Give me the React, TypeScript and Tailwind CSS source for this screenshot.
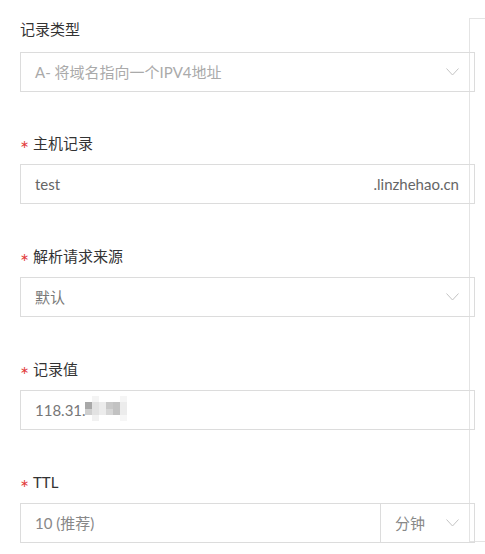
import React from "react";

const Chevron = () => (
  <svg width="13" height="8" viewBox="0 0 13 8" className="shrink-0">
    <polyline points="0.5,0.5 6.5,7 12.5,0.5" fill="none" stroke="#c4c4c4" strokeWidth="1" />
  </svg>
);

const Label = ({ text, required = true, mb = "mb-[11px]" }: { text: string; required?: boolean; mb?: string }) => (
  <div className={`h-[20px] flex items-center text-[15px] text-[#333] ${mb}`}>
    {required && (
      <span
        className="w-[13px] shrink-0 text-[#e23a3a] text-[11px] leading-none translate-y-[1px]"
        style={{ fontFamily: '"DejaVu Sans", sans-serif' }}
      >
        ∗
      </span>
    )}
    <span>{text}</span>
  </div>
);

const Mosaic = () => (
  <svg width="48" height="28" viewBox="0 0 48 28" className="-ml-[1px]">
    <rect x="0" y="6" width="7" height="7" fill="#a8a8a8" />
    <rect x="0" y="13" width="7" height="6" fill="#cfcfcf" />
    <rect x="7" y="0" width="7" height="6" fill="#f4f4f4" />
    <rect x="7" y="6" width="7" height="13" fill="#e2e2e2" />
    <rect x="7" y="19" width="7" height="6" fill="#f1f1f1" />
    <rect x="14" y="6" width="7" height="13" fill="#ececec" />
    <rect x="21" y="6" width="7" height="7" fill="#c8c8c8" />
    <rect x="21" y="13" width="7" height="6" fill="#d6d6d6" />
    <rect x="28" y="6" width="7" height="13" fill="#c2c2c2" />
    <rect x="35" y="0" width="7" height="6" fill="#f5f5f5" />
    <rect x="35" y="6" width="7" height="13" fill="#ececec" />
    <rect x="35" y="19" width="7" height="6" fill="#f6f6f6" />
  </svg>
);

export default function App() {
  return (
    <div
      className="relative w-[485px] h-[554px] bg-white overflow-hidden"
      style={{ fontFamily: 'Lato, "Noto Sans CJK SC", sans-serif' }}
    >
      <div className="absolute left-[469px] top-[18px] w-[100px] h-[524px] border border-[#e4e4e4] pointer-events-none" />
      <div className="relative pl-[20px] pr-[10px] pt-[19px]">
        {/* 记录类型 */}
        <div className="mb-[41px]">
          <Label text="记录类型" required={false} mb="mb-[13px]" />
          <div className="h-[40px] border border-[#dcdcdc] flex items-center pl-[14px] pr-[15px] text-[15px] text-[#aaaaaa]">
            <span className="flex-1">A- 将域名指向一个IPV4地址</span>
            <Chevron />
          </div>
        </div>

        {/* 主机记录 */}
        <div className="mb-[42px]">
          <Label text="主机记录" />
          <div className="h-[40px] border border-[#dcdcdc] flex items-center pl-[14px] pr-[15px] text-[15px] text-[#666]">
            <span className="flex-1">test</span>
            <span>.linzhehao.cn</span>
          </div>
        </div>

        {/* 解析请求来源 */}
        <div className="mb-[42px]">
          <Label text="解析请求来源" />
          <div className="h-[40px] border border-[#dcdcdc] flex items-center pl-[14px] pr-[15px] text-[15px] text-[#777]">
            <span className="flex-1">默认</span>
            <Chevron />
          </div>
        </div>

        {/* 记录值 */}
        <div className="mb-[42px]">
          <Label text="记录值" />
          <div className="h-[40px] border border-[#dcdcdc] flex items-center pl-[14px] pr-[15px] text-[15px] text-[#777]">
            <span>118.31.</span>
            <Mosaic />
          </div>
        </div>

        {/* TTL */}
        <div>
          <Label text="TTL" />
          <div className="h-[40px] flex">
            <div className="w-[361px] h-full border border-[#dcdcdc] flex items-center pl-[14px] text-[15px] text-[#888]">
              10 (推荐)
            </div>
            <div className="flex-1 h-full border-y border-r border-[#dcdcdc] flex items-center pl-[14px] pr-[15px] text-[15px] text-[#888]">
              <span className="flex-1">分钟</span>
              <Chevron />
            </div>
          </div>
        </div>
      </div>
    </div>
  );
}
